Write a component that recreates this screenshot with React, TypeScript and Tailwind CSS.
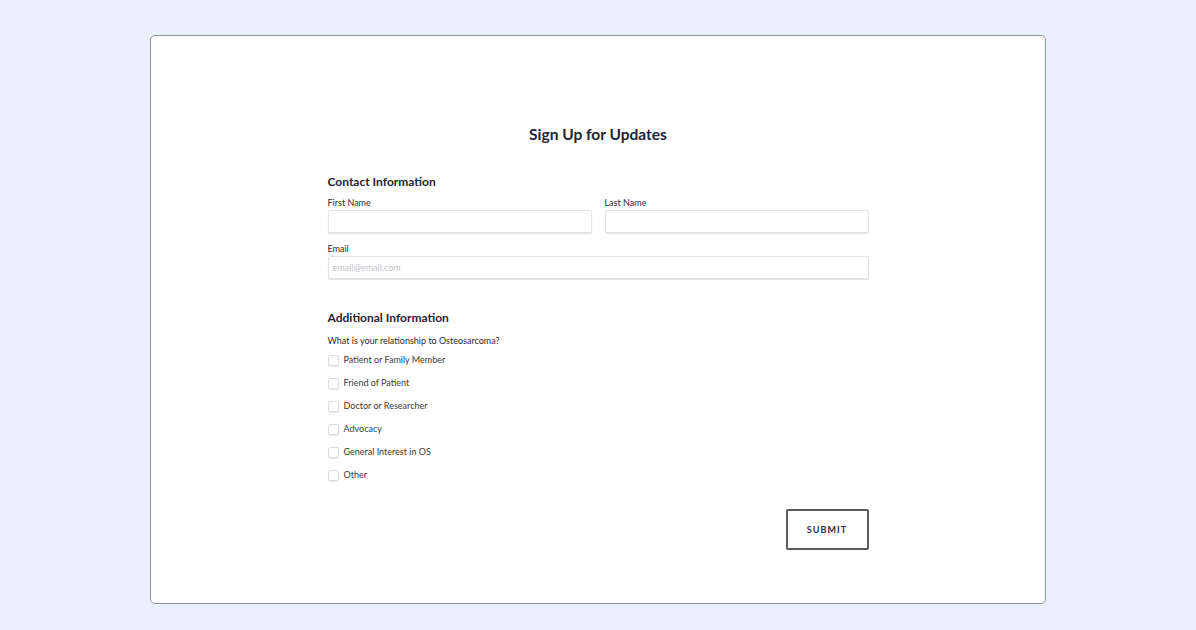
const options = [
  'Patient or Family Member',
  'Friend of Patient',
  'Doctor or Researcher',
  'Advocacy',
  'General Interest in OS',
  'Other',
];

function Field({ label, placeholder, className }: { label: string; placeholder?: string; className?: string }) {
  return (
    <div className={className}>
      <div className="text-[9px] leading-[12px] text-[#2b2b33]">{label}</div>
      <input
        placeholder={placeholder}
        className="mt-px block h-[23px] w-full rounded-[2px] border border-[#e4e4e6] bg-white px-[4px] text-[9px] text-[#333] shadow-[0_1px_1px_rgba(0,0,0,0.12)] outline-none placeholder:text-[#c4c4c8]"
      />
    </div>
  );
}

export default function App() {
  return (
    <div className="flex h-[630px] w-full justify-center bg-[#e9effd] pt-[35px] font-['Lato',sans-serif]">
      <div className="h-[569px] w-[896px] rounded-[5px] border border-[#8e939c] bg-white pt-[88px]">
        <div className="mx-auto w-[541px]">
          <h1 className="text-center text-[15.5px] font-bold leading-[20px] text-[#1f2437]">
            Sign Up for Updates
          </h1>

          <h2 className="mt-[30px] text-[12px] font-bold leading-[16px] text-[#1f2437]">
            Contact Information
          </h2>
          <div className="mt-[7px] flex gap-[13px]">
            <Field label="First Name" className="flex-1" />
            <Field label="Last Name" className="flex-1" />
          </div>
          <Field label="Email" placeholder="email@email.com" className="mt-[10px]" />

          <h2 className="mt-[31px] text-[12px] font-bold leading-[16px] text-[#1f2437]">
            Additional Information
          </h2>
          <div className="mt-[9px] text-[9px] leading-[12px] text-[#2b2b33]">
            What is your relationship to Osteosarcoma?
          </div>
          <div className="mt-[7px] flex flex-col gap-[11px]">
            {options.map((o) => (
              <label key={o} className="flex h-[12px] items-center gap-[5px] text-[9px] leading-[12px] text-[#3a3a42]">
                <span className="block h-[11px] w-[11px] rounded-[2px] border border-[#dcdcde] bg-white shadow-[0_1px_1px_rgba(0,0,0,0.08)]" />
                {o}
              </label>
            ))}
          </div>

          <div className="mt-[28px] flex justify-end">
            <button className="h-[41px] w-[83px] rounded-[2px] border-2 border-[#5a5a60] bg-white text-[9px] font-bold tracking-[0.12em] text-[#2d3040]">
              SUBMIT
            </button>
          </div>
        </div>
      </div>
    </div>
  );
}
